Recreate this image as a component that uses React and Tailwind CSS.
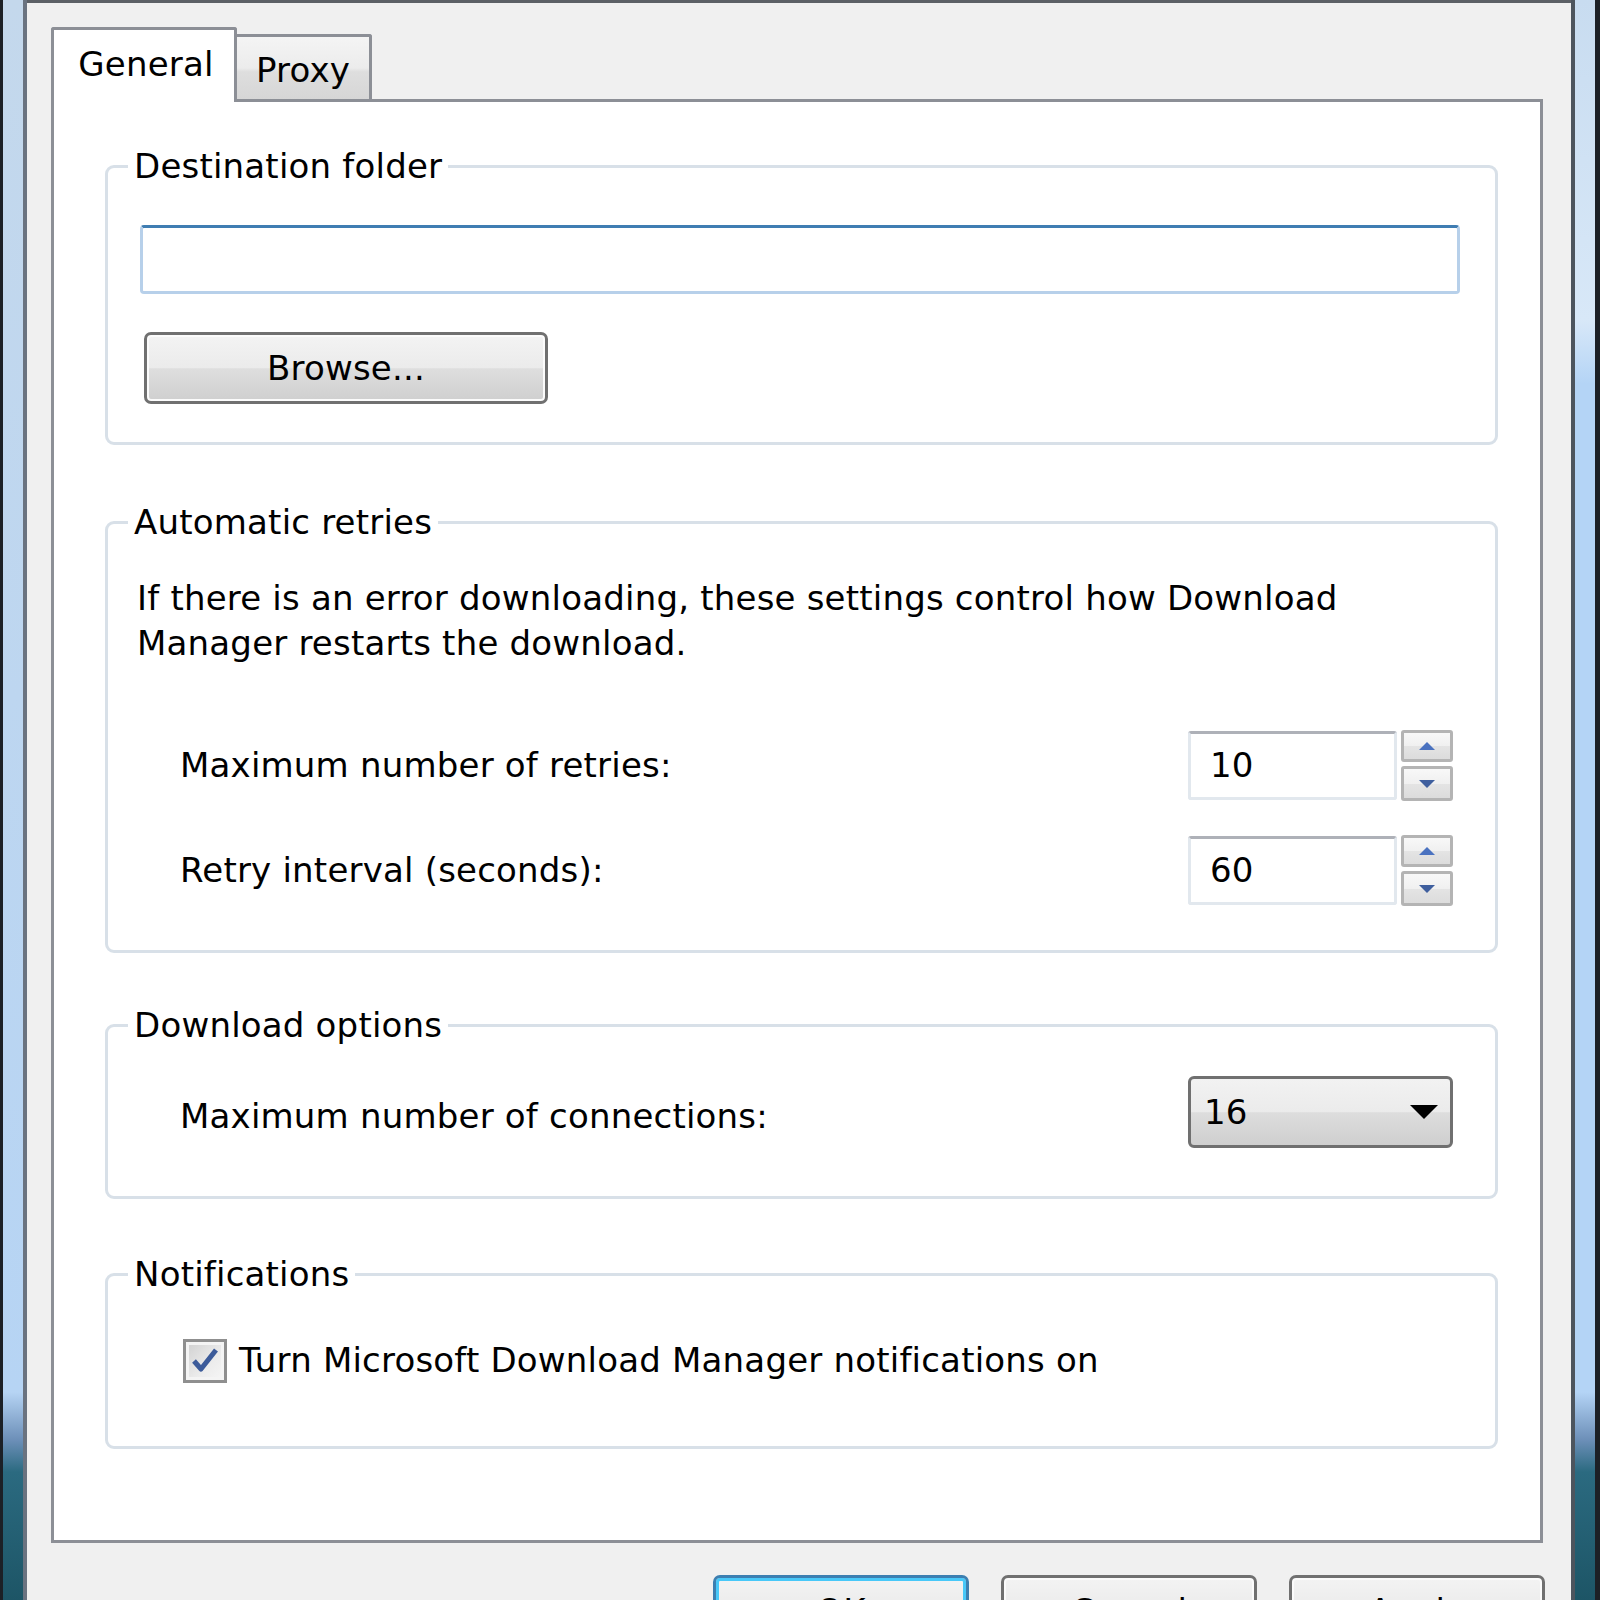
import React from 'react'

// Vista style "Options" dialog, General tab

const Group = ({ title, className, children }) => (
  <fieldset className={`rounded-[9px] border-[3px] border-[#d8e0e8] ${className}`}>
    <legend className="ml-[20px] px-[6px] leading-[40px]">{title}</legend>
    {children}
  </fieldset>
)

const Arrow = ({ down }) => (
  <svg width="18" height="10" viewBox="0 0 18 10">
    {down ? (
      <path d="M1 1 H17 L9 9 Z" fill="#3f5f9e" />
    ) : (
      <path d="M1 9 H17 L9 1 Z" fill="#4a72c0" />
    )}
  </svg>
)

const Spinner = ({ value }) => (
  <div className="flex items-center gap-[4px]">
    <div className="flex h-[69px] w-[209px] items-center rounded-[3px] border-[3px] border-[#e2e8ee] border-t-[#aeb1b8] pl-[19px]">
      {value}
    </div>
    <div className="flex flex-col gap-[4px]">
      <div className="flex h-[32px] w-[52px] items-center justify-center rounded-[3px] border-[3px] border-[#b4b4b4] bg-[linear-gradient(to_bottom,#f8f8f8_0%,#f0f0f0_50%,#e4e4e4_51%,#dcdcdc_100%)]">
        <Arrow />
      </div>
      <div className="flex h-[35px] w-[52px] items-center justify-center rounded-[3px] border-[3px] border-[#b4b4b4] bg-[linear-gradient(to_bottom,#f8f8f8_0%,#f0f0f0_50%,#e4e4e4_51%,#dcdcdc_100%)]">
        <Arrow down />
      </div>
    </div>
  </div>
)

const Button = ({ children, primary, className }) => (
  <div
    className={`flex h-[72px] w-[256px] shrink-0 items-center justify-center rounded-[7px] border-[3px] bg-[linear-gradient(to_bottom,#f3f3f3_0%,#ebebeb_50%,#dedede_51%,#cfcfcf_100%)] ${
      primary ? 'border-[#3c7fb1] shadow-[inset_0_0_0_3px_#48c8f8]' : 'border-[#707070] shadow-[inset_0_0_0_2px_#fbfbfb]'
    } ${className || ''}`}
  >
    {children}
  </div>
)

export default function App() {
  return (
    <div className="flex h-[1600px] w-[1600px] overflow-hidden bg-[#f0f0f0] font-['DejaVu_Sans',sans-serif] text-[34px] tracking-[0.2px] text-black">
      {/* left window frame */}
      <div className="h-full w-[27px] shrink-0 border-l-[3px] border-r-[4px] border-l-[#1c2026] border-r-[#6a7380] bg-[linear-gradient(to_bottom,#c4d8ec_0%,#b6d4f4_87%,#6c8fb8_90%,#2b6a80_92%,#1d5566_100%)]" />

      {/* dialog body */}
      <div className="flex h-full flex-1 flex-col overflow-hidden border-t-[3px] border-[#5c6066] bg-[#f0f0f0] pl-[24px] pr-[28px] pt-[24px]">
        {/* tabs */}
        <div className="flex h-[72px] shrink-0 items-end">
          <div className="relative z-10 -mb-[3px] flex h-[75px] w-[186px] items-start justify-center rounded-t-[3px] border-[3px] border-b-0 border-[#8c8f96] bg-white pl-[4px] pt-[9px]">
            General
          </div>
          <div className="flex h-[65px] w-[135px] items-start justify-center rounded-tr-[3px] border-[3px] border-b-0 border-l-0 border-[#8c8f96] bg-[linear-gradient(to_bottom,#f4f4f4_0%,#ececec_50%,#dedede_56%,#d6d6d6_100%)] pt-[8px]">
            Proxy
          </div>
        </div>

        {/* tab page */}
        <div className="flex h-[1444px] shrink-0 flex-col gap-[57px] border-[3px] border-[#8c8f96] bg-white pl-[51px] pr-[42px] pt-[44px]">
          <Group title="Destination folder" className="pb-[38px]">
            <div className="ml-[32px] mr-[35px] mt-[39px] h-[69px] rounded-[4px] border-[3px] border-[#b7d0ea] border-t-[#3f7db2]" />
            <Button className="ml-[36px] mt-[38px] w-[404px]">Browse...</Button>
          </Group>

          <Group title="Automatic retries" className="pb-[44px]">
            <p className="mt-[34px] pl-[29px] leading-[45px]">
              If there is an error downloading, these settings control how Download
              <br />
              Manager restarts the download.
            </p>
            <div className="mt-[64px] flex flex-col gap-[34px] pl-[72px] pr-[42px]">
              <div className="flex items-center justify-between">
                <span>Maximum number of retries:</span>
                <Spinner value="10" />
              </div>
              <div className="flex items-center justify-between">
                <span>Retry interval (seconds):</span>
                <Spinner value="60" />
              </div>
            </div>
          </Group>

          <Group title="Download options" className="-mt-[5px] pb-[48px]">
            <div className="mt-[31px] flex items-center justify-between pl-[72px] pr-[42px]">
              <span className="mt-[8px]">Maximum number of connections:</span>
              <div className="flex h-[72px] w-[265px] items-center justify-between rounded-[6px] border-[3px] border-[#707070] bg-[linear-gradient(to_bottom,#f2f2f2_0%,#ebebeb_50%,#dddddd_51%,#cfcfcf_100%)] pl-[13px] pr-[12px]">
                <span>16</span>
                <svg width="28" height="14" viewBox="0 0 28 14">
                  <path d="M0 0 H28 L14 14 Z" fill="#000" />
                </svg>
              </div>
            </div>
          </Group>

          <Group title="Notifications" className="-mt-[2px] pb-[60px]">
            <div className="mt-[41px] flex items-center gap-[12px] pl-[75px]">
              <div className="flex h-[44px] w-[44px] items-center justify-center border-[3px] border-[#8f8f8f] bg-[linear-gradient(135deg,#cfcfcf_0%,#ececec_60%,#f6f6f6_100%)] shadow-[inset_0_0_0_3px_#f4f4f4]">
                <svg width="30" height="30" viewBox="0 0 30 30">
                  <path d="M4 15 L11 23 L26 4" fill="none" stroke="#3c5b9a" strokeWidth="5" strokeLinejoin="round" />
                </svg>
              </div>
              <span>Turn Microsoft Download Manager notifications on</span>
            </div>
          </Group>
        </div>

        {/* dialog buttons */}
        <div className="-mr-[2px] mt-[32px] flex shrink-0 justify-end gap-[32px]">
          <Button primary>OK</Button>
          <Button>Cancel</Button>
          <Button>Apply</Button>
        </div>
      </div>

      {/* right window frame */}
      <div className="h-full w-[29px] shrink-0 border-l-[4px] border-r-[5px] border-l-[#4d555e] border-r-[#1c2026] bg-[linear-gradient(to_bottom,#c8dcf0_0%,#d8e8f8_20%,#b4d4f6_24%,#b4d4f6_87%,#6c8fb8_90%,#2b6a80_92%,#1d5566_100%)]" />
    </div>
  )
}
